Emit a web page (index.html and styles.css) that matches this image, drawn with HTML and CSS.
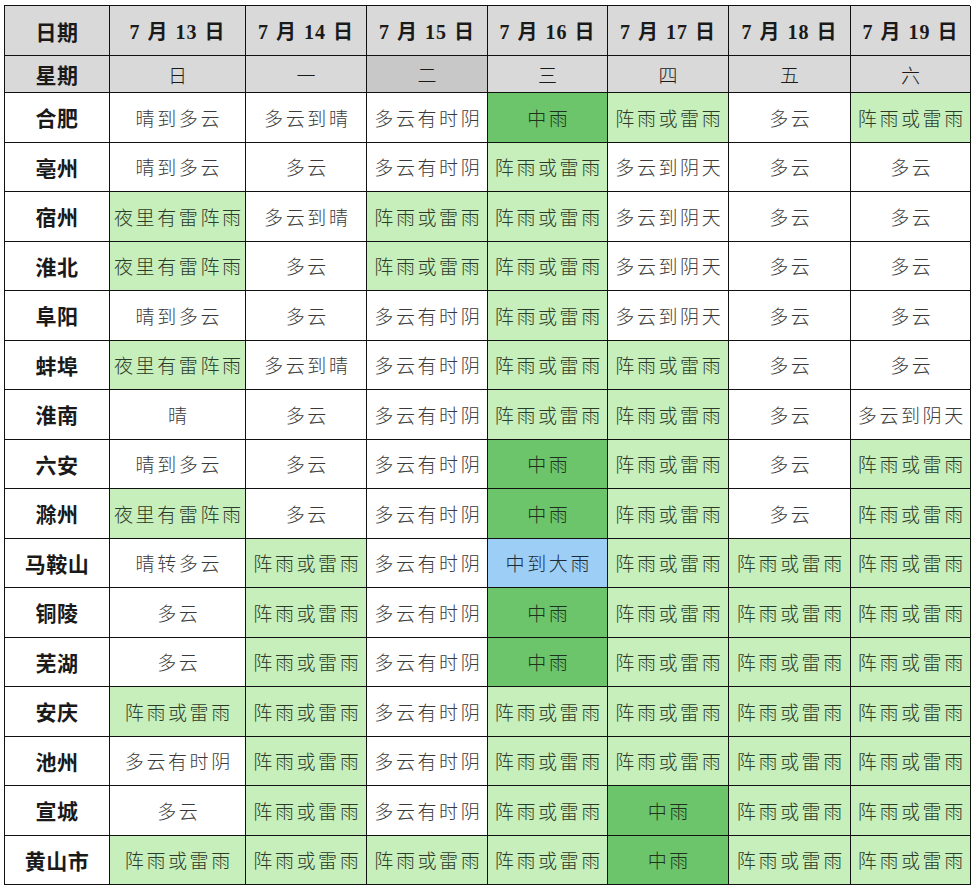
FILE: index.html
```html
<!DOCTYPE html>
<html lang="zh-CN">
<head>
<meta charset="utf-8">
<title>安徽天气预报</title>
<link rel="stylesheet" href="styles.css">
</head>
<body>
<div class="grid" id="grid">
  <div class="c hd name">日期</div>
  <div class="c hd date">7 月 13 日</div>
  <div class="c hd date">7 月 14 日</div>
  <div class="c hd date">7 月 15 日</div>
  <div class="c hd date">7 月 16 日</div>
  <div class="c hd date">7 月 17 日</div>
  <div class="c hd date">7 月 18 日</div>
  <div class="c hd date">7 月 19 日</div>

  <div class="c hd name">星期</div>
  <div class="c hd wk">日</div>
  <div class="c hd wk">一</div>
  <div class="c hd wk dark">二</div>
  <div class="c hd wk">三</div>
  <div class="c hd wk">四</div>
  <div class="c hd wk">五</div>
  <div class="c hd wk">六</div>

  <div class="c name">合肥</div>
  <div class="c">晴到多云</div><div class="c">多云到晴</div><div class="c">多云有时阴</div><div class="c m">中雨</div><div class="c l">阵雨或雷雨</div><div class="c">多云</div><div class="c l">阵雨或雷雨</div>

  <div class="c name">亳州</div>
  <div class="c">晴到多云</div><div class="c">多云</div><div class="c">多云有时阴</div><div class="c l">阵雨或雷雨</div><div class="c">多云到阴天</div><div class="c">多云</div><div class="c">多云</div>

  <div class="c name">宿州</div>
  <div class="c l">夜里有雷阵雨</div><div class="c">多云到晴</div><div class="c l">阵雨或雷雨</div><div class="c l">阵雨或雷雨</div><div class="c">多云到阴天</div><div class="c">多云</div><div class="c">多云</div>

  <div class="c name">淮北</div>
  <div class="c l">夜里有雷阵雨</div><div class="c">多云</div><div class="c l">阵雨或雷雨</div><div class="c l">阵雨或雷雨</div><div class="c">多云到阴天</div><div class="c">多云</div><div class="c">多云</div>

  <div class="c name">阜阳</div>
  <div class="c">晴到多云</div><div class="c">多云</div><div class="c">多云有时阴</div><div class="c l">阵雨或雷雨</div><div class="c">多云到阴天</div><div class="c">多云</div><div class="c">多云</div>

  <div class="c name">蚌埠</div>
  <div class="c l">夜里有雷阵雨</div><div class="c">多云到晴</div><div class="c">多云有时阴</div><div class="c l">阵雨或雷雨</div><div class="c l">阵雨或雷雨</div><div class="c">多云</div><div class="c">多云</div>

  <div class="c name">淮南</div>
  <div class="c">晴</div><div class="c">多云</div><div class="c">多云有时阴</div><div class="c l">阵雨或雷雨</div><div class="c l">阵雨或雷雨</div><div class="c">多云</div><div class="c">多云到阴天</div>

  <div class="c name">六安</div>
  <div class="c">晴到多云</div><div class="c">多云</div><div class="c">多云有时阴</div><div class="c m">中雨</div><div class="c l">阵雨或雷雨</div><div class="c">多云</div><div class="c l">阵雨或雷雨</div>

  <div class="c name">滁州</div>
  <div class="c l">夜里有雷阵雨</div><div class="c">多云</div><div class="c">多云有时阴</div><div class="c m">中雨</div><div class="c l">阵雨或雷雨</div><div class="c">多云</div><div class="c l">阵雨或雷雨</div>

  <div class="c name">马鞍山</div>
  <div class="c">晴转多云</div><div class="c l">阵雨或雷雨</div><div class="c">多云有时阴</div><div class="c b">中到大雨</div><div class="c l">阵雨或雷雨</div><div class="c l">阵雨或雷雨</div><div class="c l">阵雨或雷雨</div>

  <div class="c name">铜陵</div>
  <div class="c">多云</div><div class="c l">阵雨或雷雨</div><div class="c">多云有时阴</div><div class="c m">中雨</div><div class="c l">阵雨或雷雨</div><div class="c l">阵雨或雷雨</div><div class="c l">阵雨或雷雨</div>

  <div class="c name">芜湖</div>
  <div class="c">多云</div><div class="c l">阵雨或雷雨</div><div class="c">多云有时阴</div><div class="c m">中雨</div><div class="c l">阵雨或雷雨</div><div class="c l">阵雨或雷雨</div><div class="c l">阵雨或雷雨</div>

  <div class="c name">安庆</div>
  <div class="c l">阵雨或雷雨</div><div class="c l">阵雨或雷雨</div><div class="c">多云有时阴</div><div class="c l">阵雨或雷雨</div><div class="c l">阵雨或雷雨</div><div class="c l">阵雨或雷雨</div><div class="c l">阵雨或雷雨</div>

  <div class="c name">池州</div>
  <div class="c">多云有时阴</div><div class="c l">阵雨或雷雨</div><div class="c">多云有时阴</div><div class="c l">阵雨或雷雨</div><div class="c l">阵雨或雷雨</div><div class="c l">阵雨或雷雨</div><div class="c l">阵雨或雷雨</div>

  <div class="c name">宣城</div>
  <div class="c">多云</div><div class="c l">阵雨或雷雨</div><div class="c">多云有时阴</div><div class="c l">阵雨或雷雨</div><div class="c m">中雨</div><div class="c l">阵雨或雷雨</div><div class="c l">阵雨或雷雨</div>

  <div class="c name">黄山市</div>
  <div class="c l">阵雨或雷雨</div><div class="c l">阵雨或雷雨</div><div class="c l">阵雨或雷雨</div><div class="c l">阵雨或雷雨</div><div class="c m">中雨</div><div class="c l">阵雨或雷雨</div><div class="c l">阵雨或雷雨</div>
</div>
</body>
</html>
```

FILE: styles.css
```css
html, body {
  margin: 0;
  padding: 0;
  background: #ffffff;
}

body {
  padding: 5px 0 0 4px;
}

.grid {
  display: grid;
  grid-template-columns: 105px 136px 121px 121px 120px 121px 122px 120px;
  grid-template-rows: 50px 37px repeat(16, 1fr);
  width: 966px;
  height: 880px;
  box-sizing: border-box;
  border-top: 1.5px solid #111;
  border-left: 1.5px solid #111;
  font-family: "Noto Sans CJK SC", "Noto Sans", sans-serif;
}

.c {
  display: flex;
  align-items: center;
  justify-content: center;
  box-sizing: border-box;
  border-right: 1.5px solid #111;
  border-bottom: 1.5px solid #111;
  background: #ffffff;
  color: #3a3a3a;
  font-size: 19px;
  font-weight: 300;
  letter-spacing: 2.6px;
  text-indent: 2.6px;
  white-space: nowrap;
  overflow: hidden;
}

.c.l {
  background: #c7efbb;
  color: #2c3a2a;
}

.c.m {
  background: #6cc56a;
  color: #1f321e;
}

.c.b {
  background: #9dcff6;
  color: #1e2a38;
}

.c.name {
  font-family: "Noto Sans CJK SC", sans-serif;
  font-weight: 700;
  font-size: 21px;
  letter-spacing: 0.5px;
  text-indent: 0;
  color: #1a1a1a;
}

.c.hd {
  background: #d9d9d9;
  color: #1a1a1a;
}

.c.hd.dark {
  background: #c8c8c8;
}

.c.date {
  font-family: "Liberation Serif", "Noto Sans CJK SC", serif;
  font-weight: 700;
  font-size: 20px;
  letter-spacing: 1px;
  text-indent: 0;
  word-spacing: 1px;
}

.c.wk {
  font-family: "Noto Sans CJK SC", sans-serif;
  font-size: 19px;
  font-weight: 300;
}
```
